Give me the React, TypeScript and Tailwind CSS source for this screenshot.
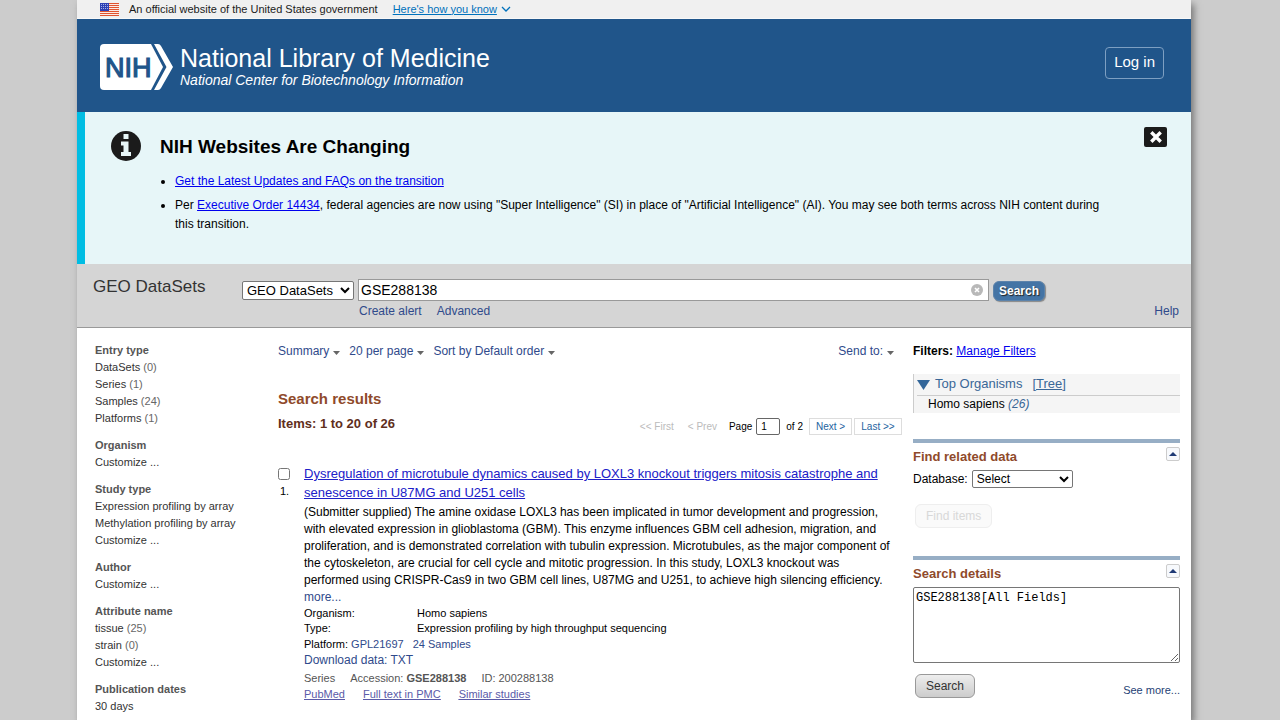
import { useState } from 'react';

interface FilterItem {
  label: string;
  count?: number;
}

interface FilterGroup {
  title: string;
  items: FilterItem[];
}

const filterGroups: FilterGroup[] = [
  {
    title: 'Entry type',
    items: [
      { label: 'DataSets', count: 0 },
      { label: 'Series', count: 1 },
      { label: 'Samples', count: 24 },
      { label: 'Platforms', count: 1 },
    ],
  },
  { title: 'Organism', items: [{ label: 'Customize ...' }] },
  {
    title: 'Study type',
    items: [
      { label: 'Expression profiling by array' },
      { label: 'Methylation profiling by array' },
      { label: 'Customize ...' },
    ],
  },
  { title: 'Author', items: [{ label: 'Customize ...' }] },
  {
    title: 'Attribute name',
    items: [{ label: 'tissue', count: 25 }, { label: 'strain', count: 0 }, { label: 'Customize ...' }],
  },
  { title: 'Publication dates', items: [{ label: '30 days' }] },
];

function UsFlag() {
  return (
    <svg viewBox="0 0 19 13" className="h-[13px] w-[19px]" aria-hidden="true">
      <path d="M0 0H19V13H0Z" fill="#fbe9e4" />
      <path
        d="M0 0.500H19M0 2.500H19M0 4.500H19M0 6.500H19M0 8.500H19M0 10.500H19M0 12.500H19"
        stroke="#e0532f"
        strokeWidth="1"
      />
      <path d="M0 0H9V8H0Z" fill="#2c3fb5" />
      <path
        d="M1 1.500H8M1 3.500H8M1 5.500H8"
        stroke="#c5cbee"
        strokeWidth="0.8"
        strokeDasharray="1 1"
      />
    </svg>
  );
}

function NihLogo() {
  return (
    <svg viewBox="0 0 73 46" className="h-[46px] w-[73px]" role="img" aria-label="NIH">
      <path d="M4 0H51L63 23L51 46H4Q0 46 0 42V4Q0 0 4 0Z" fill="#fff" />
      <path d="M54 0H58Q60 0 61 2L73 23L61 44Q60 46 58 46H54L66.500 23Z" fill="#fff" />
      <text
        x="5"
        y="33"
        fontSize="27"
        fill="#20558a"
        stroke="#20558a"
        strokeWidth="1.200"
        fontFamily="'Liberation Sans', Arial, sans-serif"
      >
        NIH
      </text>
    </svg>
  );
}

function Caret() {
  return (
    <svg viewBox="0 0 7 4" className="mt-[3px] h-1 w-[7px]" aria-hidden="true">
      <path d="M0 0H7L3.500 4Z" fill="#666" />
    </svg>
  );
}

function MenuLink({ label }: { label: string }) {
  return (
    <button type="button" className="flex items-center gap-1 text-[#2f4a8b]">
      {label}
      <Caret />
    </button>
  );
}

function GovBanner() {
  return (
    <div className="flex h-[19px] items-center border-b border-[#f8f8f8] bg-[#f0f0f0] pl-[23px] text-[11px] text-[#1b1b1b]">
      <UsFlag />
      <span className="ml-[10px]">An official website of the United States government</span>
      <button type="button" className="ml-[15px] flex items-center text-[#0071bc]">
        <span className="underline">Here's how you know</span>
        <svg viewBox="0 0 10 6" className="ml-1 h-[6px] w-[10px]" aria-hidden="true">
          <path d="M1 1L5 5L9 1" fill="none" stroke="#0071bc" strokeWidth="1.300" />
        </svg>
      </button>
    </div>
  );
}

function Header() {
  return (
    <header className="flex h-[93px] items-center justify-between bg-[#20558a] pt-[2px] pr-[27px] pl-[23px] text-white">
      <a href="#" className="flex items-center gap-[7px]">
        <NihLogo />
        <span className="flex flex-col">
          <span className="text-[25px] leading-[26px]">National Library of Medicine</span>
          <span className="text-[14px] leading-[18px] italic">National Center for Biotechnology Information</span>
        </span>
      </a>
      <button type="button" className="mb-2 h-8 rounded border border-[#7d9fc2] px-2 text-[15px]">
        Log in
      </button>
    </header>
  );
}

function Notice({ onClose }: { onClose: () => void }) {
  return (
    <section className="flex h-[152px] items-start border-l-8 border-[#00bde3] bg-[#e7f6f8] pt-[15px] pr-6 pl-[26px]">
      <svg viewBox="0 0 30 30" className="mt-1 h-[30px] w-[30px] shrink-0" aria-hidden="true">
        <circle cx="15" cy="15" r="15" fill="#1b1b1b" />
        <path d="M12.500 3H17.500V8H12.500ZM10 10.500H17.500V21H20V25H10V21H12.500V14.500H10Z" fill="#e7f6f8" />
      </svg>
      <div className="ml-[19px] flex-1">
        <h2 className="mt-[9px] text-[19px] leading-[22px] font-bold text-black">NIH Websites Are Changing</h2>
        <ul className="mt-[14px] list-disc space-y-[5px] pl-[15px] text-[12px] leading-[19px] text-black">
          <li>
            <a href="#" className="text-[#0000ee] underline">
              Get the Latest Updates and FAQs on the transition
            </a>
          </li>
          <li>
            Per{' '}
            <a href="#" className="text-[#0000ee] underline">
              Executive Order 14434
            </a>
            , federal agencies are now using "Super Intelligence" (SI) in place of "Artificial Intelligence" (AI). You may
            see both terms across NIH content during this transition.
          </li>
        </ul>
      </div>
      <button
        type="button"
        aria-label="Close"
        onClick={onClose}
        className="ml-[26px] flex h-5 w-[23px] items-center justify-center rounded-xs bg-[#1b1b1b]"
      >
        <svg viewBox="0 0 12 12" className="h-3 w-3" aria-hidden="true">
          <path d="M2.500 2.500L9.500 9.500M9.500 2.500L2.500 9.500" stroke="#fff" strokeWidth="3.400" strokeLinecap="square" />
        </svg>
      </button>
    </section>
  );
}

function SearchBar() {
  const [term, setTerm] = useState('GSE288138');

  return (
    <form
      role="search"
      onSubmit={(e) => e.preventDefault()}
      className="flex h-16 items-start border-b border-[#999] bg-[#d5d5d5] pt-[15px] pr-3 pl-4"
    >
      <h1 className="w-[149px] shrink-0 text-[17px] leading-4 text-[#333]">GEO DataSets</h1>
      <div className="flex-1">
        <div className="mr-[134px] flex h-[22px] items-center">
          <select
            aria-label="Database"
            className="h-[19px] w-[112px] shrink-0 rounded-xs border border-[#767676] bg-white text-[13px] leading-4 text-black"
          >
            <option>GEO DataSets</option>
          </select>
          <div className="relative ml-1 flex-1">
            <input
              type="text"
              aria-label="Search term"
              value={term}
              onChange={(e) => setTerm(e.target.value)}
              className="block h-[22px] w-full border border-[#999] bg-white px-[2px] text-[14px] text-black"
            />
            <button
              type="button"
              aria-label="Clear"
              onClick={() => setTerm('')}
              className="absolute top-[5px] right-[6px]"
            >
              <svg viewBox="0 0 12 12" className="h-3 w-3" aria-hidden="true">
                <circle cx="6" cy="6" r="6" fill="#b8b8b8" />
                <path d="M4 4L8 8M8 4L4 8" stroke="#fff" strokeWidth="1.600" />
              </svg>
            </button>
          </div>
          <button
            type="submit"
            className="mt-[2px] ml-1 h-5 w-[52px] rounded-md border border-[#5c83ab] bg-[#4474a5] text-[12px] font-bold text-white shadow-[1px_1px_1px_#888] text-shadow-[1px_1px_1px_#222]"
          >
            Search
          </button>
        </div>
        <div className="mt-[2px] ml-[117px] flex gap-[15px] text-[12px] leading-4 text-[#2f4a8b]">
          <a href="#">Create alert</a>
          <a href="#">Advanced</a>
          <a href="#" className="ml-auto">
            Help
          </a>
        </div>
      </div>
    </form>
  );
}

function Filters() {
  return (
    <nav className="-mt-px w-[183px] shrink-0 space-y-[10px] text-[11px] leading-[17px] text-[#333]">
      {filterGroups.map((group) => (
        <div key={group.title}>
          <h3 className="font-bold text-[#555]">{group.title}</h3>
          <ul>
            {group.items.map((item) => (
              <li key={item.label}>
                <a href="#">{item.label}</a>
                {item.count !== undefined && <span className="text-[#666]"> ({item.count})</span>}
              </li>
            ))}
          </ul>
        </div>
      ))}
    </nav>
  );
}

function Pager() {
  return (
    <div className="flex h-[17px] items-center text-[10px] text-black">
      <span className="text-[#bbb]">&lt;&lt; First</span>
      <span className="ml-[14px] text-[#bbb]">&lt; Prev</span>
      <label htmlFor="page" className="ml-3">
        Page
      </label>
      <input
        id="page"
        type="text"
        defaultValue="1"
        className="ml-1 h-[17px] w-6 rounded-xs border border-[#666] px-1 text-[10px]"
      />
      <span className="ml-[6px]">of 2</span>
      <a href="#" className="ml-[6px] flex h-[17px] w-[43px] items-center justify-center border border-[#ddd] text-[#2463a0]">
        Next &gt;
      </a>
      <a href="#" className="ml-[2px] flex h-[17px] w-12 items-center justify-center border border-[#ddd] text-[#2463a0]">
        Last &gt;&gt;
      </a>
    </div>
  );
}

function Result() {
  return (
    <article className="mt-[29px] flex items-start text-[12px] text-black">
      <div className="w-[26px] shrink-0">
        <input type="checkbox" id="result-1" className="mt-1 block h-3 w-3" />
        <label htmlFor="result-1" className="mt-[3px] block pl-[2px] text-[11px] leading-4">
          1.
        </label>
      </div>
      <div className="flex-1">
        <h3 className="text-[13px] leading-[19px]">
          <a href="#" className="text-[#2020c8] underline">
            Dysregulation of microtubule dynamics caused by LOXL3 knockout triggers mitosis catastrophe and
            <br />
            senescence in U87MG and U251 cells
          </a>
        </h3>
        <p className="mt-[2px] pr-[6px] leading-[17px]">
          (Submitter supplied) The amine oxidase LOXL3 has been implicated in tumor development and progression, with
          elevated expression in glioblastoma (GBM). This enzyme influences GBM cell adhesion, migration, and
          proliferation, and is demonstrated correlation with tubulin expression. Microtubules, as the major component of
          the cytoskeleton, are crucial for cell cycle and mitotic progression. In this study, LOXL3 knockout was
          performed using CRISPR-Cas9 in two GBM cell lines, U87MG and U251, to achieve high silencing efficiency.
          <br />
          <a href="#" className="text-[#2f4a8b]">
            more...
          </a>
        </p>
        <dl className="grid grid-cols-[113px_1fr] text-[11px] leading-[15px]">
          <dt>Organism:</dt>
          <dd>Homo sapiens</dd>
          <dt>Type:</dt>
          <dd>Expression profiling by high throughput sequencing</dd>
        </dl>
        <p className="text-[11px] leading-4">
          Platform:{' '}
          <a href="#" className="text-[#2f4a8b]">
            GPL21697
          </a>
          <a href="#" className="ml-[9px] text-[#2f4a8b]">
            24 Samples
          </a>
        </p>
        <p className="leading-4 text-[#2f4a8b]">
          <a href="#">Download data: TXT</a>
        </p>
        <div className="mt-[2px] flex gap-[15px] text-[11px] leading-4 text-[#555]">
          <span>Series</span>
          <span>
            Accession: <b>GSE288138</b>
          </span>
          <span>ID: 200288138</span>
        </div>
        <div className="flex gap-[18px] text-[11px] leading-4 text-[#5a5aa8] underline">
          <a href="#">PubMed</a>
          <a href="#">Full text in PMC</a>
          <a href="#">Similar studies</a>
        </div>
      </div>
    </article>
  );
}

function PortletHead({ title }: { title: string }) {
  return (
    <div className="flex items-start justify-between border-t-4 border-[#97aec5]">
      <h3 className="mt-[5px] text-[13px] leading-[18px] font-bold text-[#8f4a2b]">{title}</h3>
      <button
        type="button"
        aria-label={`Collapse ${title}`}
        className="mt-1 flex h-[14px] w-[14px] items-center justify-center rounded-xs border border-[#ccc] bg-[#f7f9fc]"
      >
        <svg viewBox="0 0 8 4" className="h-1 w-2" aria-hidden="true">
          <path d="M0 4L4 0L8 4Z" fill="#1f3a75" />
        </svg>
      </button>
    </div>
  );
}

function RightColumn() {
  return (
    <aside className="ml-[11px] w-[267px] shrink-0 text-[12px] text-black">
      <p className="leading-4">
        <b>Filters:</b>{' '}
        <a href="#" className="text-[#0000ee] underline">
          Manage Filters
        </a>
      </p>

      <div className="mt-[15px] border-l border-[#ccc] bg-[#f5f5f5] pl-[3px]">
        <div className="flex h-[22px] items-center border-b border-[#ccc] pb-[2px] text-[13px] text-[#3a6797]">
          <svg viewBox="0 0 13 10" className="mt-[2px] h-[10px] w-[13px]" aria-hidden="true">
            <path d="M0 0H13L6.500 10Z" fill="#336699" />
          </svg>
          <span className="ml-[5px]">Top Organisms</span>
          <a href="#" className="ml-[10px]">
            [<span className="underline">Tree</span>]
          </a>
        </div>
        <p className="pl-[11px] leading-[17px]">
          Homo sapiens{' '}
          <a href="#" className="text-[#3a6797] italic">
            (26)
          </a>
        </p>
      </div>

      <section className="mt-[26px]">
        <PortletHead title="Find related data" />
        <div className="mt-1 flex h-[18px] items-center">
          <label htmlFor="related-db">Database:</label>
          <select
            id="related-db"
            className="ml-1 h-[18px] w-[101px] rounded-xs border border-[#767676] bg-white text-[12px] leading-4"
          >
            <option>Select</option>
          </select>
        </div>
        <button
          type="button"
          disabled
          className="mt-4 ml-[2px] h-6 rounded-md border border-[#eee] bg-[#fafafa] px-[10px] text-[12px] text-[#d8d8d8]"
        >
          Find items
        </button>
      </section>

      <section className="mt-7">
        <PortletHead title="Search details" />
        <textarea
          aria-label="Search details"
          defaultValue="GSE288138[All Fields]"
          className="mt-1 block h-[76px] w-full resize rounded-xs border border-[#767676] bg-white p-[2px] font-['Liberation_Mono','Courier_New',monospace] text-[12px] leading-4"
        />
        <div className="mt-[11px] flex items-start justify-between pl-[2px]">
          <button
            type="button"
            className="h-6 rounded-md border border-[#999] bg-linear-to-b from-[#eee] to-[#ccc] px-[10px] text-[12px] text-[#333]"
          >
            Search
          </button>
          <a href="#" className="mt-2 text-[11px] leading-4 text-[#1f3f75]">
            See more...
          </a>
        </div>
      </section>
    </aside>
  );
}

export default function App() {
  const [showNotice, setShowNotice] = useState(true);

  return (
    <div className="min-h-screen bg-[#ccc] pr-[89px] pl-[77px] font-['Liberation_Sans',Arial,sans-serif]">
      <div className="min-h-screen bg-white shadow-[3px_4px_7px_#777]">
        <GovBanner />
        <Header />
        {showNotice && <Notice onClose={() => setShowNotice(false)} />}
        <SearchBar />
        <div className="flex items-start pt-[15px] pr-[11px] pl-[18px]">
          <Filters />
          <main className="flex-1">
            <div className="flex items-center gap-[9px] text-[12px] leading-4">
              <MenuLink label="Summary" />
              <MenuLink label="20 per page" />
              <MenuLink label="Sort by Default order" />
              <div className="mr-2 ml-auto">
                <MenuLink label="Send to:" />
              </div>
            </div>
            <h2 className="mt-[30px] text-[15px] leading-5 font-bold text-[#8f4a2b]">Search results</h2>
            <div className="mt-[6px] flex h-5 items-end justify-between">
              <h3 className="self-start text-[13px] leading-[18px] font-bold text-[#5f2f1c]">Items: 1 to 20 of 26</h3>
              <Pager />
            </div>
            <Result />
          </main>
          <RightColumn />
        </div>
      </div>
    </div>
  );
}
